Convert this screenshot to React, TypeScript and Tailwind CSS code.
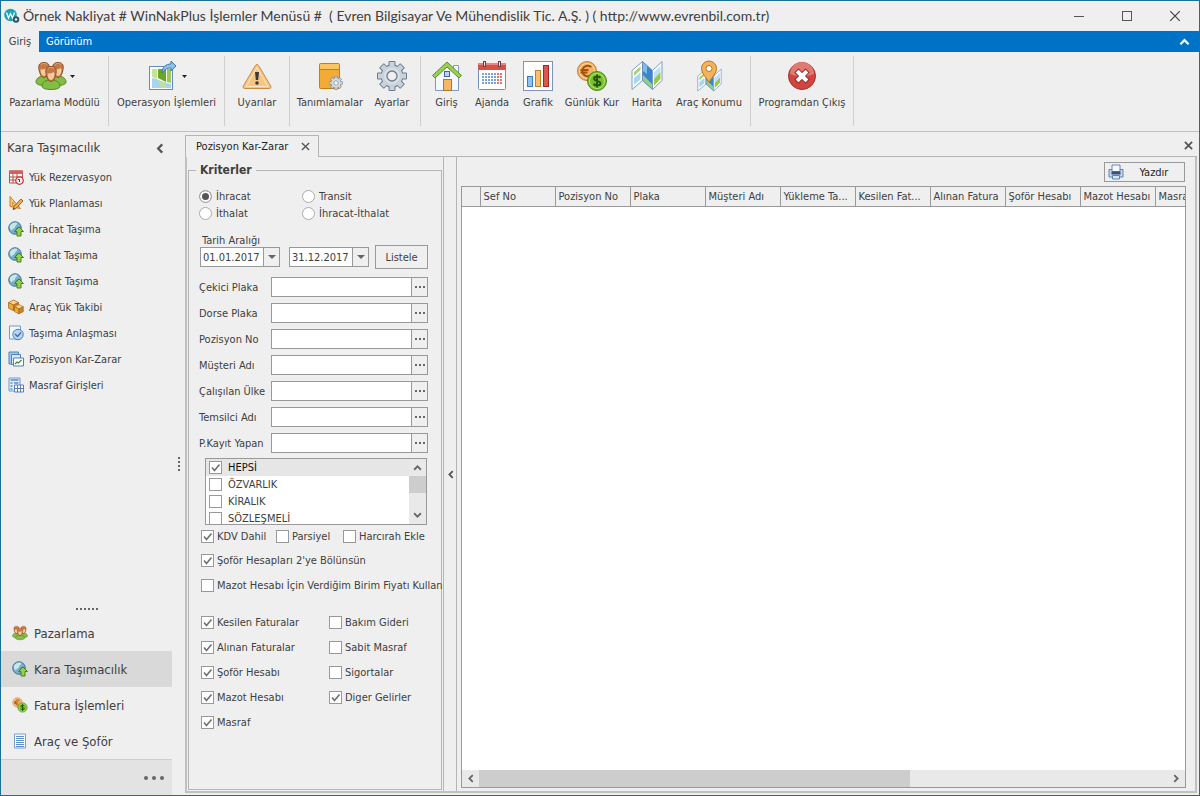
import { useState } from "react";
import type { ReactNode } from "react";

type IconProps = { className?: string };

function Svg({ className = "size-8", children }: IconProps & { children: ReactNode }) {
  return (
    <svg viewBox="0 0 32 32" className={`shrink-0 ${className}`} aria-hidden="true">
      {children}
    </svg>
  );
}

function Body({ x, y }: { x: number; y: number }) {
  return (
    <path
      transform={`translate(${x} ${y})`}
      d="M-9 5c0-4 4-6 9-6s9 2 9 6c0 2.500-4 3.500-9 3.500S-9 7.500-9 5z"
      fill="#84bd45"
      stroke="#4e8a22"
    />
  );
}

function Head({ x, y }: { x: number; y: number }) {
  return (
    <g transform={`translate(${x} ${y})`}>
      <path d="M-5 0c-1-5 1-7 5-7s6 2 5 7c-.5 4-2.500 8-5 8s-4.500-4-5-8z" fill="#c47a45" stroke="#8f5225" />
      <path d="M-3.500 0c2 0 5 0 6-1.500L3.500 0c0 3-1.500 6.500-3.500 6.500S-3.500 3-3.500 0z" fill="#f7caa0" />
      <path d="M-3-5c2-1.500 4-1.500 6 0" fill="none" stroke="#e0a373" />
    </g>
  );
}

function PeopleIcon({ className }: IconProps) {
  return (
    <Svg className={className}>
      <Body x={10} y={17} />
      <Body x={22} y={17} />
      <Head x={9} y={9.5} />
      <Head x={23} y={9.5} />
      <Body x={16} y={21} />
      <Head x={16} y={13.5} />
    </Svg>
  );
}

function MapShareIcon() {
  return (
    <Svg>
      <rect x="2.500" y="6.500" width="23" height="23" fill="#fff" stroke="#5d8fc4" />
      <path d="M5 9h5v10l-5-2z" fill="#c5e396" />
      <path d="M11 9h8v13l-8-4z" fill="#6aa81f" />
      <path d="M20 9h4v14l-4-1z" fill="#9ccb52" />
      <path d="M5 18c6 1 10 4 19 6v4H5z" fill="#a9d4f0" />
      <path d="M11 20l8 3v5h-5z" fill="#bfe0a0" />
      <path d="M15 13c0-6 4-9 9-9V1l5 5-5 5V8c-4 0-6 1-9 5z" fill="#8fc1ea" stroke="#3f76ad" />
    </Svg>
  );
}

function WarningIcon() {
  return (
    <Svg>
      <path d="M16 4.500c.8 0 1.300.5 1.700 1.200l12 20.300c.8 1.500 0 2.500-1.500 2.500H3.800c-1.500 0-2.300-1-1.500-2.500l12-20.300c.4-.7.9-1.200 1.700-1.200z" fill="#f7c583" stroke="#c98a48" />
      <path d="M16 7.500L5 26.500h22z" fill="none" stroke="#fde6c4" />
      <path d="M14 12h4l-.8 8h-2.400z" fill="#3a3a3a" />
      <circle cx="16" cy="23" r="1.800" fill="#3a3a3a" />
    </Svg>
  );
}

function Gear({ x, y, s }: { x: number; y: number; s: number }) {
  const teeth = [0, 45, 90, 135];
  return (
    <g transform={`translate(${x} ${y}) scale(${s})`}>
      <g fill="#6d7c8e" stroke="#6d7c8e" strokeWidth="2" strokeLinejoin="round">
        {teeth.map((a) => (
          <rect key={a} x="-2.500" y="-14" width="5" height="28" transform={`rotate(${a})`} />
        ))}
        <circle r="10.500" />
      </g>
      <g fill="#c9d1db">
        {teeth.map((a) => (
          <rect key={a} x="-2.500" y="-14" width="5" height="28" transform={`rotate(${a})`} />
        ))}
        <circle r="10.500" />
      </g>
      <circle r="8" fill="#d9dfe6" />
      <circle r="5" fill="#efefef" stroke="#6d7c8e" strokeWidth="1.300" />
    </g>
  );
}

function BoxGearIcon() {
  return (
    <Svg>
      <rect x="5.500" y="3.500" width="20" height="25" rx="1" fill="#f2ab36" stroke="#c47f14" />
      <path d="M6 4h19v5H6z" fill="#f8c665" />
      <path d="M6 9.500h19" stroke="#c47f14" />
      <Gear x={22} y={23} s={0.46} />
    </Svg>
  );
}

function GearIcon() {
  return (
    <Svg>
      <Gear x={16} y={16} s={1} />
    </Svg>
  );
}

function HomeIcon() {
  return (
    <Svg>
      <path d="M22.500 5.500h5v9h-5z" fill="#fff" stroke="#7d9cc4" />
      <path d="M4.500 15L16 4l11.500 11v15.500h-23z" fill="#f5f9ff" stroke="#7d9cc4" />
      <path d="M1.500 15.500L16 2l14.500 13.500-2.500 2.500L16 7 4 18z" fill="#9ccc55" stroke="#5b9321" />
      <rect x="13.500" y="11.500" width="5" height="5" fill="#b7d4f5" stroke="#45639b" />
      <rect x="12.500" y="19.500" width="8" height="11" fill="#f5b763" stroke="#b87324" />
    </Svg>
  );
}

function CalendarIcon() {
  return (
    <Svg>
      <rect x="2.500" y="4.500" width="27" height="25" rx="1" fill="#fff" stroke="#7090c0" />
      <path d="M2 3h28v7H2z" fill="#d65045" />
      <path d="M2 3h28v2H2z" fill="#e8857c" />
      <path d="M8.500 1v6M23.500 1v6" stroke="#6b4040" strokeWidth="3" />
      <path d="M8.500 2v4M23.500 2v4" stroke="#e6dede" />
      {[13, 16, 19, 22].map((y) => (
        <g key={y}>
          {[6, 9, 12, 15, 18, 21, 24].map((x) => (
            <rect key={x} x={x} y={y} width="2" height="2" fill={x > 20 ? "#e07a6e" : "#7ba3da"} />
          ))}
        </g>
      ))}
    </Svg>
  );
}

function ChartIcon() {
  return (
    <Svg>
      <rect x="1.500" y="1.500" width="29" height="29" fill="#fff" stroke="#8092bb" />
      <rect x="5.500" y="16.500" width="5" height="10" fill="#8fc2ee" stroke="#3d7cb8" />
      <rect x="13.500" y="10.500" width="5" height="16" fill="#f7bf6e" stroke="#c17d22" />
      <rect x="21.500" y="5.500" width="5" height="21" fill="#d9574c" stroke="#9c281f" />
    </Svg>
  );
}

function CoinsIcon({ className }: IconProps) {
  return (
    <Svg className={className}>
      <circle cx="11" cy="11" r="9.500" fill="#f3b161" stroke="#c97d26" />
      <circle cx="11" cy="11" r="7.500" fill="none" stroke="#fadbae" />
      <path d="M15.500 7c-5-3-9 0-9 4s4 7 9 4M4.500 10h8M4.500 12.500h7" fill="none" stroke="#a3530f" strokeWidth="1.800" />
      <circle cx="21" cy="21" r="9.500" fill="#79bf2e" stroke="#4a8c13" />
      <circle cx="21" cy="21" r="7.500" fill="none" stroke="#b9e07f" />
      <path d="M24.500 17.800c-2-1.800-6.500-1.500-6.500.7 0 2.800 6.500 2 6.500 5 0 2.300-5 2.500-7 .5M21 14.500v13" fill="none" stroke="#24580a" strokeWidth="2" />
    </Svg>
  );
}

function MapFolds() {
  return (
    <>
      <path d="M1 10.500L11.500 1.500v19L1 29.500z" fill="#fff" stroke="#7d9cc4" />
      <path d="M11.500 1.500l10 9v19l-10-9z" fill="#3c86ce" stroke="#6a8fbf" />
      <path d="M21.500 10.500L31 1.500v19l-9.500 9z" fill="#fff" stroke="#7d9cc4" />
      <path d="M3 12l6.500-5.500V10L3 16z" fill="#a4d46a" />
      <path d="M3 18l6.500-5.500v7L3 25z" fill="#a9d8ee" />
      <path d="M12 15l9 9v4.500l-9-8z" fill="#8fd08a" />
      <path d="M12 2.500l4 3.500v8l-4-3z" fill="#7dbcec" />
      <path d="M23 12l6.500-6v6L23 19z" fill="#bfe0f6" />
      <path d="M23 19l6.500-7v7L23 25.500z" fill="#93ca49" />
    </>
  );
}

function MapIcon() {
  return (
    <Svg>
      <MapFolds />
    </Svg>
  );
}

function MapPinIcon() {
  return (
    <Svg>
      <g transform="translate(4 8) scale(.78)"><MapFolds /></g>
      <path d="M16 22.500C13 17 8.500 13.500 8.500 8.500a7.500 7.500 0 0115 0c0 5-4.500 8.500-7.500 14z" fill="#f4b25a" stroke="#b7751e" />
      <circle cx="16" cy="8.500" r="3" fill="#fff" stroke="#b7751e" />
    </Svg>
  );
}

function ExitIcon() {
  return (
    <Svg>
      <circle cx="16" cy="16" r="13.500" fill="#d0453f" stroke="#a8302b" />
      <path d="M4 14a12 12 0 0124 0c-7 3-17 3-24 0z" fill="#e07a74" />
      <path d="M12.500 12.500l7 7M19.500 12.500l-7 7" stroke="#9a2c28" strokeWidth="6" strokeLinecap="square" />
      <path d="M12.500 12.500l7 7M19.500 12.500l-7 7" stroke="#fff" strokeWidth="4" strokeLinecap="square" />
    </Svg>
  );
}

function ReserveIcon() {
  return (
    <Svg className="size-4">
      <path d="M3 4h26v24H3z" fill="#fff" stroke="#b84a48" strokeWidth="2" />
      <path d="M2 3h28v7H2z" fill="#d2605c" />
      <path d="M3 16h26M3 22h26M10 10v18M18 10v18" stroke="#b84a48" strokeWidth="2" />
      <circle cx="23" cy="23" r="7.500" fill="#fbeceb" stroke="#b3393b" strokeWidth="2.500" />
      <path d="M19.500 21H23v5" fill="none" stroke="#8a2527" strokeWidth="2" />
    </Svg>
  );
}

function PlanIcon() {
  return (
    <Svg className="size-4">
      <path d="M4 3l21 24-21-4z" fill="#f8c77c" stroke="#c47d24" strokeWidth="2" />
      <path d="M9 14l6 8-6-1z" fill="#efefef" stroke="#c47d24" strokeWidth="1.500" />
      <path d="M26 8l4 4-14 15-6 2 2-6z" fill="#f0ae4c" stroke="#9a6420" strokeWidth="2" />
      <path d="M10 29l1-4 3 3z" fill="#444" />
    </Svg>
  );
}

function GlobeUpIcon() {
  return (
    <Svg className="size-4">
      <circle cx="14" cy="14" r="12.500" fill="#79aed0" stroke="#3d6f96" strokeWidth="2" />
      <path d="M4 9c5-7 11-7 15-5-1 4-4 4-5 8s-6 3-6 7c-4-2-5-6-4-10z" fill="#c8e6e4" />
      <path d="M17 14c4-4 7-2 8-1-1 6-5 10-9 11-2-4-2-7 1-10z" fill="#4d8f7c" />
      <path d="M22 12l9 9h-5v9h-8v-9h-5z" fill="#97d04e" stroke="#44821b" strokeWidth="2" />
    </Svg>
  );
}

function Cube({ x, y, s }: { x: number; y: number; s: number }) {
  return (
    <g transform={`translate(${x} ${y}) scale(${s})`} stroke="#a5661a" strokeWidth="1.200" strokeLinejoin="round">
      <path d="M0 4l8-4 8 4-8 4z" fill="#fbd48b" />
      <path d="M0 4l8 4v9l-8-4z" fill="#f0a838" />
      <path d="M16 4l-8 4v9l8-4z" fill="#cd8120" />
    </g>
  );
}

function CubesIcon() {
  return (
    <Svg className="size-4">
      <Cube x={1} y={2} s={1.25} />
      <Cube x={13} y={11} s={1.1} />
    </Svg>
  );
}

function AgreementIcon() {
  return (
    <Svg className="size-4">
      <path d="M3 2h22v26H3z" fill="#f5faff" stroke="#6f9acb" strokeWidth="2" />
      <circle cx="20" cy="19" r="10.500" fill="#b5d4f1" stroke="#4f83ba" strokeWidth="2" />
      <path d="M14 18l5 5 7-8" fill="none" stroke="#3c6fa6" strokeWidth="2.500" />
    </Svg>
  );
}

function ReportIcon() {
  return (
    <Svg className="size-4">
      <path d="M2 2h19v24H2z" fill="#a3c9ee" stroke="#4f83ba" strokeWidth="2" />
      <path d="M7 7h18v20H7z" fill="#d7e9fa" stroke="#4f83ba" strokeWidth="2" />
      <path d="M11 14h20v16H11z" fill="#fff" stroke="#4f83ba" strokeWidth="2" />
      <path d="M14 26l4-4 3 2 6-6" fill="none" stroke="#3d8a3a" strokeWidth="2.500" />
    </Svg>
  );
}

function ExpenseIcon() {
  return (
    <Svg className="size-4">
      <path d="M2 2h22v26H2z" fill="#e3effb" stroke="#6f9acb" strokeWidth="2" />
      <path d="M5 6h16M5 12h4M12 12h9M5 18h4M5 24h4" stroke="#5c8dc4" strokeWidth="3" />
      <path d="M13 16h18v14H13z" fill="#fff" stroke="#5b7fb0" strokeWidth="2" />
      <path d="M13 23h18M19 16v14M25 16v14" stroke="#5b7fb0" strokeWidth="2" />
    </Svg>
  );
}

function DocumentIcon() {
  return (
    <Svg className="size-4">
      <path d="M5 2h22v28H5z" fill="#f7fbff" stroke="#7f9cc6" strokeWidth="2" />
      <path d="M8 7h16M8 11h16M8 15h16M8 19h16M8 23h16M8 27h16" stroke="#5b8fce" strokeWidth="2" />
    </Svg>
  );
}

function PrinterIcon() {
  return (
    <Svg className="size-4">
      <path d="M2 11h28v15H2z" fill="#c3d6ee" stroke="#6484b3" strokeWidth="2" />
      <path d="M8 2h16v13H8z" fill="#f4f9ff" stroke="#6484b3" strokeWidth="2" />
      <path d="M7 15h18v6H7z" fill="#3a527a" />
      <path d="M9 23h14v7H9z" fill="#d6e8fb" stroke="#6484b3" strokeWidth="2" />
    </Svg>
  );
}

function LogoIcon() {
  return (
    <Svg className="size-4">
      <circle cx="13" cy="14" r="12.500" fill="#1ba3b8" />
      <path d="M5 9l4 11 4-9 4 9 4-11" fill="none" stroke="#fff" strokeWidth="2.500" />
      <circle cx="24" cy="23" r="6.500" fill="#2f5468" />
      <circle cx="24" cy="23" r="2.500" fill="#dbe9ee" />
    </Svg>
  );
}

function Chevron({ dir, className = "size-[9px]" }: { dir: "up" | "down" | "left" | "right"; className?: string }) {
  const d = {
    up: "M1 6l3-3 3 3",
    down: "M1 2l3 3 3-3",
    left: "M6 1L3 4l3 3",
    right: "M2 1l3 3-3 3",
  }[dir];
  return (
    <svg viewBox="0 0 8 8" className={className} fill="none" stroke="currentColor" strokeWidth="1.600" aria-hidden="true">
      <path d={d} />
    </svg>
  );
}

function Cross({ className }: { className: string }) {
  return (
    <svg viewBox="0 0 10 10" className={className} fill="none" stroke="currentColor" aria-hidden="true">
      <path d="M1 1l8 8M9 1L1 9" />
    </svg>
  );
}

type RibbonItem = { label: string; icon: ReactNode; width: string; menu?: boolean };

const ribbon: RibbonItem[][] = [
  [{ label: "Pazarlama Modülü", icon: <PeopleIcon />, width: "w-[101px]", menu: true }],
  [{ label: "Operasyon İşlemleri", icon: <MapShareIcon />, width: "w-[109px]", menu: true }],
  [{ label: "Uyarılar", icon: <WarningIcon />, width: "w-[58px]" }],
  [
    { label: "Tanımlamalar", icon: <BoxGearIcon />, width: "w-[74px]" },
    { label: "Ayarlar", icon: <GearIcon />, width: "w-[50px]" },
  ],
  [
    { label: "Giriş", icon: <HomeIcon />, width: "w-[45px]" },
    { label: "Ajanda", icon: <CalendarIcon />, width: "w-[46px]" },
    { label: "Grafik", icon: <ChartIcon />, width: "w-[46px]" },
    { label: "Günlük Kur", icon: <CoinsIcon />, width: "w-[62px]" },
    { label: "Harita", icon: <MapIcon />, width: "w-[48px]" },
    { label: "Araç Konumu", icon: <MapPinIcon />, width: "w-[76px]" },
  ],
  [{ label: "Programdan Çıkış", icon: <ExitIcon />, width: "w-[96px]" }],
];

const sideLinks = [
  { label: "Yük Rezervasyon", icon: <ReserveIcon /> },
  { label: "Yük Planlaması", icon: <PlanIcon /> },
  { label: "İhracat Taşıma", icon: <GlobeUpIcon /> },
  { label: "İthalat Taşıma", icon: <GlobeUpIcon /> },
  { label: "Transit Taşıma", icon: <GlobeUpIcon /> },
  { label: "Araç Yük Takibi", icon: <CubesIcon /> },
  { label: "Taşıma Anlaşması", icon: <AgreementIcon /> },
  { label: "Pozisyon Kar-Zarar", icon: <ReportIcon /> },
  { label: "Masraf Girişleri", icon: <ExpenseIcon /> },
];

const modules = [
  { label: "Pazarlama", icon: <PeopleIcon className="size-4" /> },
  { label: "Kara Taşımacılık", icon: <GlobeUpIcon /> },
  { label: "Fatura İşlemleri", icon: <CoinsIcon className="size-4" /> },
  { label: "Araç ve Şoför", icon: <DocumentIcon /> },
];

const lookups = ["Çekici Plaka", "Dorse Plaka", "Pozisyon No", "Müşteri Adı", "Çalışılan Ülke", "Temsilci Adı", "P.Kayıt Yapan"];

const ownership = [
  { label: "HEPSİ", checked: true },
  { label: "ÖZVARLIK" },
  { label: "KİRALIK" },
  { label: "SÖZLEŞMELİ" },
];

const columns = ["Sef No", "Pozisyon No", "Plaka", "Müşteri Adı", "Yükleme Ta...", "Kesilen Fat...", "Alınan Fatura", "Şoför Hesabı", "Mazot Hesabı", "Masraf"];

function Check({ label, checked = false, gap = "gap-[3px]" }: { label: string; checked?: boolean; gap?: string }) {
  return (
    <label className={`flex items-center whitespace-nowrap ${gap}`}>
      <span className="relative size-[13px] shrink-0">
        <input type="checkbox" defaultChecked={checked} className="peer block size-[13px] appearance-none border border-[#999] bg-white" />
        <svg viewBox="0 0 13 13" className="pointer-events-none absolute inset-0 hidden size-[13px] peer-checked:block" fill="none" stroke="#707070" strokeWidth="1.600">
          <path d="M3 6.500l2.500 3L10.500 3.500" />
        </svg>
      </span>
      {label}
    </label>
  );
}

function Radio({ label, checked = false }: { label: string; checked?: boolean }) {
  return (
    <label className="flex h-[17px] items-center gap-1 whitespace-nowrap">
      <input
        type="radio"
        name="direction"
        defaultChecked={checked}
        className="size-[13px] shrink-0 appearance-none rounded-full border border-[#aaa] bg-white checked:bg-[#555] checked:shadow-[inset_0_0_0_2px_white]"
      />
      {label}
    </label>
  );
}

function DateBox({ label, value }: { label: string; value: string }) {
  return (
    <div className="flex h-5 w-20 border border-[#999] bg-white">
      <input aria-label={label} defaultValue={value} className="w-0 grow pl-[2px] outline-none" />
      <button aria-label={`${label} seç`} className="flex w-4 items-center justify-center border-l border-[#999] bg-[#efefef]">
        <svg viewBox="0 0 8 4" className="h-1 w-2" aria-hidden="true">
          <path d="M0 0h8L4 4z" fill="#666" />
        </svg>
      </button>
    </div>
  );
}

function TitleBar() {
  return (
    <header className="flex h-[30px] shrink-0 items-center pl-[3px]">
      <LogoIcon />
      <h1 className="ml-[3px] grow whitespace-pre font-['Lato',sans-serif] text-[14px] leading-5">
        {"Örnek Nakliyat # WinNakPlus İşlemler Menüsü #  ( Evren Bilgisayar Ve Mühendislik Tic. A.Ş. ) ( http://www.evrenbil.com.tr)"}
      </h1>
      <button aria-label="Simge durumuna küçült" className="flex w-12 justify-center">
        <span className="h-px w-[10px] bg-[#555]" />
      </button>
      <button aria-label="Ekranı kapla" className="flex w-12 justify-center">
        <span className="size-[10px] border border-[#555]" />
      </button>
      <button aria-label="Kapat" className="flex w-12 justify-center">
        <Cross className="size-3" />
      </button>
    </header>
  );
}

function Ribbon() {
  return (
    <nav className="flex h-20 shrink-0 border-b border-[#c0c0c0] pt-1">
      {ribbon.map((group, i) => (
        <div key={i} className="flex h-[70px] border-r border-[#cfcfcf] px-[3px]">
          {group.map((item) => (
            <button key={item.label} className={`flex flex-col items-center whitespace-nowrap pt-1 ${item.width}`}>
              <span className="flex items-center gap-[3px]">
                {item.icon}
                {item.menu && (
                  <svg viewBox="0 0 5 3" className="h-[3px] w-[5px]" aria-hidden="true">
                    <path d="M0 0h5L2.500 3z" fill="#222" />
                  </svg>
                )}
              </span>
              <span className="mt-[2px]">{item.label}</span>
            </button>
          ))}
        </div>
      ))}
    </nav>
  );
}

function Sidebar() {
  const [active, setActive] = useState("Kara Taşımacılık");
  return (
    <aside className="flex w-[171px] shrink-0 flex-col">
      <div className="flex h-8 items-center justify-between pr-[7px] pl-[6px]">
        <h2 className="text-[13px] leading-5">Kara Taşımacılık</h2>
        <button aria-label="Menüyü daralt" className="text-[#555]">
          <Chevron dir="left" className="size-[11px]" />
        </button>
      </div>
      <ul className="grow">
        {sideLinks.map((l) => (
          <li key={l.label}>
            <a href="#" className="flex h-[26px] items-center gap-[5px] pl-[7px]">
              {l.icon}
              {l.label}
            </a>
          </li>
        ))}
      </ul>
      <div className="flex h-3 items-center justify-center gap-[2px]">
        {[0, 1, 2, 3, 4, 5].map((n) => (
          <span key={n} className="size-[2px] bg-[#666]" />
        ))}
      </div>
      {modules.map((m) => (
        <button
          key={m.label}
          onClick={() => setActive(m.label)}
          className={`flex h-9 shrink-0 items-center gap-[6px] pl-[11px] text-[13px] ${m.label === active ? "bg-[#d9d9d9]" : ""}`}
        >
          {m.icon}
          {m.label}
        </button>
      ))}
      <div className="flex h-9 shrink-0 items-center justify-end border-t border-[#cfcfcf] bg-[#e3e3e3] pr-2">
        <button aria-label="Diğer modüller" className="flex gap-1">
          {[0, 1, 2].map((n) => (
            <span key={n} className="size-1 rounded-full bg-[#666]" />
          ))}
        </button>
      </div>
    </aside>
  );
}

function Criteria() {
  return (
    <fieldset className="min-w-0 grow border border-[#b5b5b5] pl-[10px]">
      <legend className="-ml-[3px] px-1 text-[12px] leading-4 font-bold">Kriterler</legend>
      <div className="mt-[10px] grid grid-cols-[103px_1fr]">
        <Radio label="İhracat" checked />
        <Radio label="Transit" />
        <Radio label="İthalat" />
        <Radio label="İhracat-İthalat" />
      </div>
      <p className="mt-[13px] ml-[3px] leading-3">Tarih Aralığı</p>
      <div className="-mt-[2px] ml-px flex items-center">
        <DateBox label="Başlangıç tarihi" value="01.01.2017" />
        <span className="w-[9px]" />
        <DateBox label="Bitiş tarihi" value="31.12.2017" />
        <button className="ml-[6px] h-6 w-[53px] border border-[#999]">Listele</button>
      </div>
      <div className="mt-2 flex flex-col gap-[6px]">
        {lookups.map((name) => (
          <div key={name} className="flex h-5 items-center">
            <label htmlFor={name} className="w-[72px] whitespace-nowrap">{name}</label>
            <div className="flex h-5 w-[157px] border border-[#999] bg-white">
              <input id={name} className="w-0 grow px-1 outline-none" />
              <button aria-label={`${name} seç`} className="flex w-4 items-center justify-center gap-[2px] border-l border-[#999] bg-[#efefef]">
                <span className="size-[2px] bg-[#666]" />
                <span className="size-[2px] bg-[#666]" />
                <span className="size-[2px] bg-[#666]" />
              </button>
            </div>
          </div>
        ))}
      </div>
      <div className="mt-[5px] ml-[6px] flex h-[67px] w-[222px] border border-[#999] bg-white">
        <ul className="grow overflow-hidden">
          {ownership.map((o) => (
            <li key={o.label} className={`flex h-[17px] items-center pl-[3px] ${o.checked ? "bg-[#e6e6e6] text-[#111]" : ""}`}>
              <Check label={o.label} checked={o.checked} gap="gap-[6px]" />
            </li>
          ))}
        </ul>
        <div className="flex w-[17px] flex-col bg-[#e9e9e9] text-[#666]">
          <button aria-label="Yukarı" className="flex h-[17px] items-center justify-center"><Chevron dir="up" /></button>
          <div className="h-[17px] bg-[#cdcdcd]" />
          <button aria-label="Aşağı" className="mt-auto flex h-[17px] items-center justify-center"><Chevron dir="down" /></button>
        </div>
      </div>
      <div className="ml-[2px] flex flex-col">
        <div className="mb-px grid h-[22px] grid-cols-[75px_67px_1fr] items-center">
          <Check label="KDV Dahil" checked />
          <Check label="Parsiyel" />
          <Check label="Harcırah Ekle" />
        </div>
        <div className="flex h-[25px] items-center">
          <Check label="Şoför Hesapları 2'ye Bölünsün" checked />
        </div>
        <div className="flex h-[25px] items-center">
          <Check label="Mazot Hesabı İçin Verdiğim Birim Fiyatı Kullan" />
        </div>
        <div className="mt-3 grid auto-rows-[25px] grid-cols-[128px_1fr] items-center">
          <Check label="Kesilen Faturalar" checked />
          <Check label="Bakım Gideri" />
          <Check label="Alınan Faturalar" checked />
          <Check label="Sabit Masraf" />
          <Check label="Şoför Hesabı" checked />
          <Check label="Sigortalar" />
          <Check label="Mazot Hesabı" checked />
          <Check label="Diger Gelirler" checked />
          <Check label="Masraf" checked />
        </div>
      </div>
    </fieldset>
  );
}

function Results() {
  return (
    <section className="flex min-w-0 grow flex-col border-l border-[#b5b5b5] pt-[5px] pr-[9px] pb-[3px] pl-1">
      <button className="mr-px flex h-5 w-[81px] items-center self-end border border-[#999] pl-[3px] text-[#222]">
        <PrinterIcon />
        <span className="grow text-center">Yazdır</span>
      </button>
      <div className="mt-1 flex min-h-0 grow flex-col overflow-hidden border border-[#999] bg-white">
        <div className="grow overflow-hidden">
          <table className="w-[768px] table-fixed border-collapse">
            <thead>
              <tr className="h-[19px] bg-[#efefef]">
                <th className="w-[18px] border-r border-b border-[#999]" />
                {columns.map((c) => (
                  <th key={c} className="w-[75px] overflow-hidden border-r border-b border-[#999] pl-[3px] text-left font-normal whitespace-nowrap">
                    {c}
                  </th>
                ))}
              </tr>
            </thead>
            <tbody />
          </table>
        </div>
        <div className="flex h-[17px] shrink-0 bg-[#e9e9e9] text-[#666]">
          <button aria-label="Sola kaydır" className="flex w-[17px] items-center justify-center"><Chevron dir="left" /></button>
          <div className="flex grow">
            <div className="w-5/8 bg-[#cdcdcd]" />
          </div>
          <button aria-label="Sağa kaydır" className="flex w-[17px] items-center justify-center"><Chevron dir="right" /></button>
        </div>
      </div>
    </section>
  );
}

export default function App() {
  return (
    <div className="flex h-screen flex-col overflow-hidden border border-[#1c6f99] bg-[#efefef] font-['DejaVu_Sans_Condensed','Noto_Sans',sans-serif] text-[11px] leading-[17px] text-[#404040]">
      <TitleBar />
      <div className="flex h-[21px] shrink-0 items-stretch bg-[#0072c6]">
        <button className="w-[38px] bg-[#efefef]">Giriş</button>
        <button className="px-[7px] text-white">Görünüm</button>
        <button aria-label="Şeridi daralt" className="ml-auto px-[9px] text-white">
          <Chevron dir="up" className="size-[11px]" />
        </button>
      </div>
      <Ribbon />
      <div className="flex min-h-0 grow">
        <Sidebar />
        <div className="flex w-[13px] shrink-0 flex-col items-center justify-center gap-[2px]">
          {[0, 1, 2, 3].map((n) => (
            <span key={n} className="size-[2px] bg-[#666]" />
          ))}
        </div>
        <main className="flex min-w-0 grow flex-col pr-[2px] pb-[2px]">
          <div className="flex h-[25px] shrink-0 items-stretch pt-[3px]">
            <div className="flex w-[134px] items-center justify-between border border-b-0 border-[#b5b5b5] pr-2 pl-[10px] text-[#222]">
              Pozisyon Kar-Zarar
              <button aria-label="Sekmeyi kapat" className="text-[#555]"><Cross className="size-[9px] stroke-[1.5]" /></button>
            </div>
            <div className="flex grow items-center justify-end border-b border-[#b5b5b5] pr-1">
              <button aria-label="Belgeyi kapat" className="text-[#555]"><Cross className="size-[9px] stroke-2" /></button>
            </div>
          </div>
          <div className="flex min-h-0 grow border-2 border-t-0 border-[#c0c0c0]">
            <div className="flex w-[257px] shrink-0 border-r border-[#b5b5b5] pt-[5px] pr-px pb-px pl-px">
              <Criteria />
            </div>
            <button aria-label="Kriterleri gizle" className="flex w-3 shrink-0 items-center justify-center text-[#555]">
              <Chevron dir="left" />
            </button>
            <Results />
          </div>
        </main>
      </div>
    </div>
  );
}
